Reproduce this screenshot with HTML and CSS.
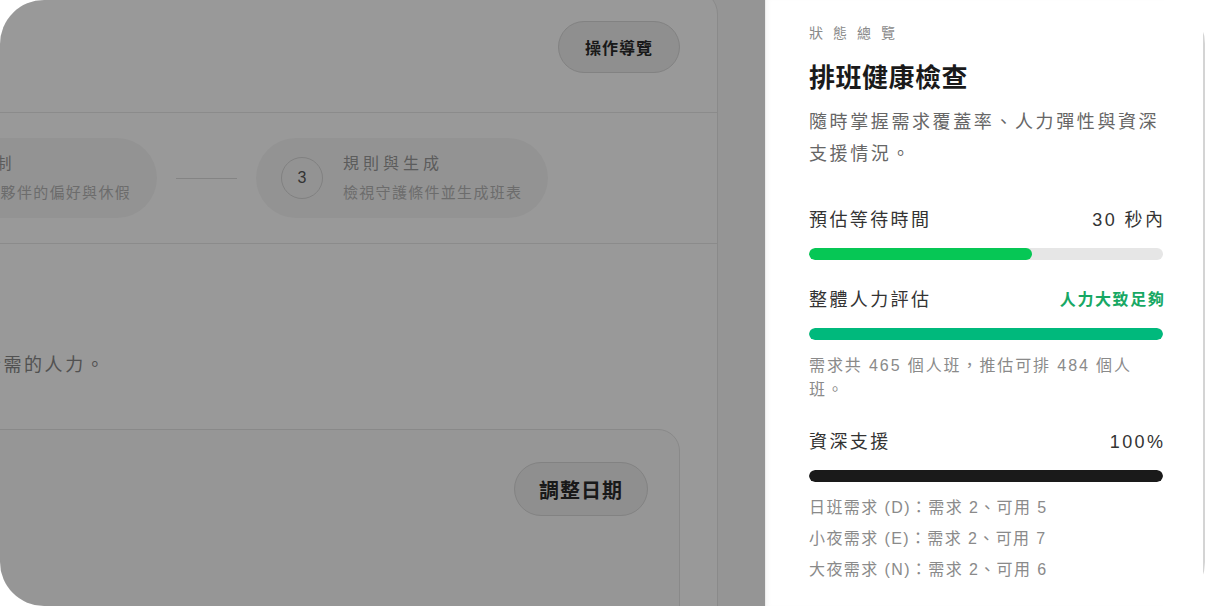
FILE: index.html
```html
<!DOCTYPE html>
<html lang="zh-Hant">
<head>
    <meta charset="utf-8"/>
    <meta name="viewport" content="width=device-width, initial-scale=1.0">
    <title>排班健康檢查</title>
    <link rel="stylesheet" href="styles.css">
</head>
<body>
    <div class="frame">
        <main class="stage">
            <section class="card">
                <header class="card-head">
                    <button class="pill-btn">操作導覽</button>
                </header>

                <div class="steps">
                    <div class="step">
                        <span class="step-num">1</span>
                        <div class="step-text">
                            <div class="step-title">匯入需求</div>
                            <div class="step-sub">上傳各班需求人數</div>
                        </div>
                    </div>
                    <span class="step-line"></span>
                    <div class="step">
                        <span class="step-num">2</span>
                        <div class="step-text">
                            <div class="step-title">班表限制</div>
                            <div class="step-sub">調整每位夥伴的偏好與休假</div>
                        </div>
                    </div>
                    <span class="step-line"></span>
                    <div class="step">
                        <span class="step-num">3</span>
                        <div class="step-text">
                            <div class="step-title">規則與生成</div>
                            <div class="step-sub">檢視守護條件並生成班表</div>
                        </div>
                    </div>
                </div>

                <div class="demand">
                    <h2 class="demand-title">需求設定</h2>
                    <p class="demand-desc">請您先依照實際營運情況，設定每個日期與每個班別所需的人力。</p>

                    <div class="range-box">
                        <div class="range-text">2025/06/01 – 2025/06/30</div>
                        <button class="pill-btn pill-btn-lg">調整日期</button>
                    </div>
                </div>
            </section>
            <div class="scrim"></div>
        </main>

        <aside class="drawer">
            <div class="eyebrow">狀態總覽</div>
            <h1 class="drawer-title">排班健康檢查</h1>
            <p class="drawer-desc">隨時掌握需求覆蓋率、人力彈性與資深支援情況。</p>

            <div class="metric">
                <div class="metric-row">
                    <span>預估等待時間</span>
                    <span>30 秒內</span>
                </div>
                <div class="bar"><div class="bar-fill fill-wait" style="width: 63%"></div></div>
            </div>

            <div class="metric">
                <div class="metric-row">
                    <span>整體人力評估</span>
                    <span class="status-ok">人力大致足夠</span>
                </div>
                <div class="bar"><div class="bar-fill fill-staff" style="width: 100%"></div></div>
                <p class="metric-note">需求共 465 個人班，推估可排 484 個人班。</p>
            </div>

            <div class="metric">
                <div class="metric-row">
                    <span>資深支援</span>
                    <span>100%</span>
                </div>
                <div class="bar"><div class="bar-fill fill-senior" style="width: 100%"></div></div>
                <ul class="shift-list">
                    <li>日班需求 (D)：需求 2、可用 5</li>
                    <li>小夜需求 (E)：需求 2、可用 7</li>
                    <li>大夜需求 (N)：需求 2、可用 6</li>
                </ul>
            </div>
        </aside>
    </div>
</body>
</html>
```

FILE: styles.css
```css
* {
    box-sizing: border-box;
}

body {
    margin: 0;
    background-color: #ffffff;
    font-family: 'Liberation Sans', 'Noto Sans CJK TC', sans-serif;
    color: #1a1a1a;
}

.frame {
    display: flex;
    height: 606px;
    border-radius: 44px;
    overflow: hidden;
}

/* page behind the drawer */
.stage {
    flex: 1;
    position: relative;
    overflow: hidden;
    background-color: #f8f8f8;
}

.scrim {
    position: absolute;
    inset: 0;
    background-color: rgba(0, 0, 0, 0.4);
}

.card {
    width: 1250px;
    margin: -10px 0 0 -532px;
    background-color: #ffffff;
    border: 1px solid #e6e6e6;
    border-radius: 24px;
    height: 700px;
}

.card-head {
    display: flex;
    justify-content: flex-end;
    padding: 30px 37px 39px;
    border-bottom: 1px solid #e8e8e8;
}

.pill-btn {
    height: 52px;
    padding: 0 26px;
    border: 1px solid #d9d9d9;
    border-radius: 26px;
    background-color: #eeeeee;
    font-family: inherit;
    font-size: 16px;
    font-weight: 700;
    letter-spacing: 1px;
    color: #2a2a2a;
}

.pill-btn-lg {
    height: 54px;
    padding: 0 24px;
    border-radius: 27px;
    font-size: 20px;
}

.steps {
    display: flex;
    align-items: center;
    padding: 25px 37px 25px 37px;
    border-bottom: 1px solid #e8e8e8;
}

.step {
    display: flex;
    align-items: center;
    gap: 20px;
    height: 80px;
    padding: 0 26px 0 25px;
    border-radius: 40px;
    background-color: #f6f6f6;
}

.step-num {
    width: 42px;
    height: 42px;
    border: 1.5px solid #d6d6d6;
    border-radius: 50%;
    display: flex;
    align-items: center;
    justify-content: center;
    font-size: 16px;
    color: #555;
}

.step-title {
    font-size: 16px;
    line-height: 24px;
    letter-spacing: 4px;
    color: #999;
}

.step-sub {
    margin-top: 5px;
    font-size: 15px;
    line-height: 24px;
    letter-spacing: 1.3px;
    color: #b5b5b5;
}

.step-line {
    width: 61px;
    height: 1px;
    margin: 0 19px;
    background-color: #dcdcdc;
}

.demand {
    padding: 60px 37px 0 40px;
}

.demand-title {
    margin: 0;
    font-size: 20px;
    line-height: 30px;
    color: #333;
}

.demand-desc {
    margin: 17px 0 0;
    font-size: 18px;
    line-height: 28px;
    letter-spacing: 2.6px;
    color: #888;
}

.range-box {
    display: flex;
    justify-content: space-between;
    align-items: flex-start;
    margin-top: 50px;
    padding: 32px 31px;
    height: 220px;
    border: 1px solid #e4e4e4;
    border-radius: 22px;
    background-color: #fbfbfb;
}

.range-text {
    font-size: 18px;
    line-height: 54px;
    color: #555;
}

/* drawer */
.drawer {
    width: 440px;
    flex-shrink: 0;
    padding: 22px 42px 0 43px;
    background-color: #ffffff;
    border-left: 1px solid #ececec;
    box-shadow: inset 4px 0 4px -2px rgba(0, 0, 0, 0.04), inset -2px 0 0 #d4d4d4;
}

.eyebrow {
    font-size: 14px;
    line-height: 22px;
    letter-spacing: 10px;
    color: #8a8a8a;
}

.drawer-title {
    margin: 16px 0 0;
    font-size: 26px;
    line-height: 36px;
    font-weight: 700;
    letter-spacing: 0.5px;
    color: #1a1a1a;
}

.drawer-desc {
    margin: 10px 0 0;
    font-size: 18px;
    line-height: 32px;
    letter-spacing: 2.6px;
    color: #666;
}

.metric {
    margin-top: 26px;
}

.drawer-desc + .metric {
    margin-top: 36px;
}

.metric-row {
    display: flex;
    justify-content: space-between;
    align-items: center;
    font-size: 18px;
    line-height: 28px;
    letter-spacing: 2.4px;
    color: #333;
}

.metric-row span:last-child {
    margin-right: -2.4px;
}

.status-ok {
    font-size: 16px;
    font-weight: 700;
    letter-spacing: 1.6px;
    color: #17a864;
}

.bar {
    height: 12px;
    margin-top: 14px;
    border-radius: 6px;
    background-color: #e6e6e6;
    overflow: hidden;
}

.bar-fill {
    height: 100%;
    border-radius: 6px;
}

.fill-wait {
    background-color: #06c755;
}

.fill-staff {
    background-color: #00b97c;
}

.fill-senior {
    background-color: #1a1a1a;
}

.metric-note {
    margin: 14px 0 0;
    font-size: 16px;
    line-height: 24px;
    letter-spacing: 1.9px;
    color: #8a8a8a;
}

.shift-list {
    list-style: none;
    margin: 10px 0 0;
    padding: 0;
    font-size: 16px;
    line-height: 31px;
    letter-spacing: 1.4px;
    color: #8a8a8a;
}
```
